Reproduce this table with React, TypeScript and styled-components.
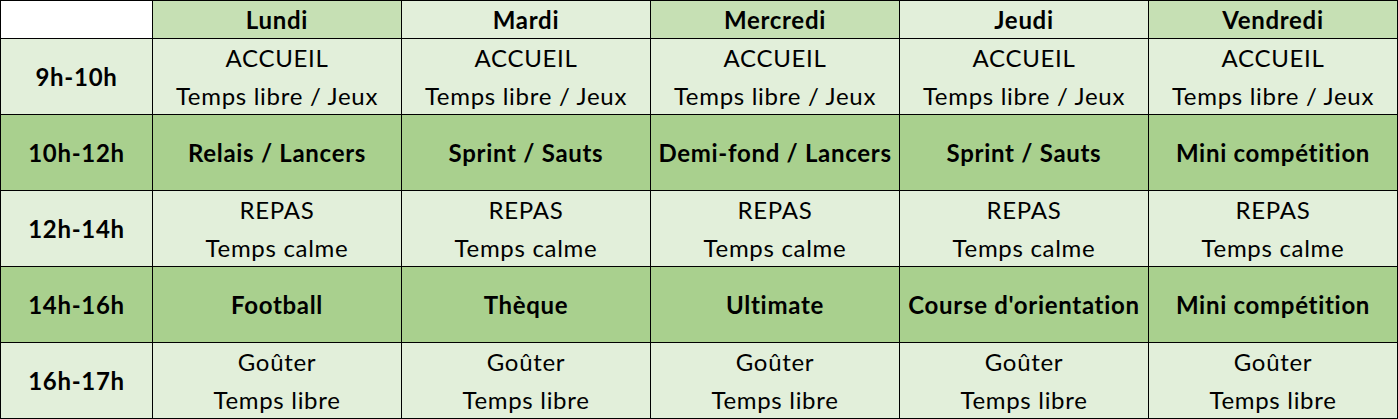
import React from "react";
import styled, { createGlobalStyle } from "styled-components";

const GlobalStyle = createGlobalStyle`
  html, body {
    margin: 0;
    padding: 0;
    background: #ffffff;
  }
  body {
    font-family: Lato, "Open Sans", "Liberation Sans", sans-serif;
    color: #000;
  }
`;

const LIGHT = "#e2efda";
const MID = "#c6e0b4";
const DARK = "#a9d08e";

const Grid = styled.div`
  display: grid;
  grid-template-columns: 151px repeat(5, 248px);
  grid-template-rows: 37px repeat(5, 75px);
  gap: 1px;
  padding: 1px;
  background: #000;
  width: 1398px;
  box-sizing: border-box;
`;

const Cell = styled.div<{ $bg: string; $bold?: boolean }>`
  background: ${(p) => p.$bg};
  display: flex;
  flex-direction: column;
  align-items: center;
  justify-content: center;
  text-align: center;
  font-size: 24px;
  letter-spacing: 0.7px;
  line-height: 38px;
  font-weight: ${(p) => (p.$bold ? 700 : 400)};
  white-space: nowrap;
`;

const days = ["Lundi", "Mardi", "Mercredi", "Jeudi", "Vendredi"];

type Slot = { time: string; activity: boolean; cells: string[][] };

const slots: Slot[] = [
  {
    time: "9h-10h",
    activity: false,
    cells: days.map(() => ["ACCUEIL", "Temps libre / Jeux"]),
  },
  {
    time: "10h-12h",
    activity: true,
    cells: [
      ["Relais / Lancers"],
      ["Sprint / Sauts"],
      ["Demi-fond / Lancers"],
      ["Sprint / Sauts"],
      ["Mini compétition"],
    ],
  },
  {
    time: "12h-14h",
    activity: false,
    cells: days.map(() => ["REPAS", "Temps calme"]),
  },
  {
    time: "14h-16h",
    activity: true,
    cells: [
      ["Football"],
      ["Thèque"],
      ["Ultimate"],
      ["Course d'orientation"],
      ["Mini compétition"],
    ],
  },
  {
    time: "16h-17h",
    activity: false,
    cells: days.map(() => ["Goûter", "Temps libre"]),
  },
];

export default function App() {
  return (
    <>
      <GlobalStyle />
      <Grid>
        <Cell $bg="#ffffff" />
        {days.map((d, i) => (
          <Cell key={d} $bg={i % 2 === 0 ? MID : LIGHT} $bold>
            {d}
          </Cell>
        ))}
        {slots.map((s) => (
          <React.Fragment key={s.time}>
            <Cell $bg={s.activity ? DARK : LIGHT} $bold>
              {s.time}
            </Cell>
            {s.cells.map((lines, i) => (
              <Cell key={i} $bg={s.activity ? DARK : LIGHT} $bold={s.activity}>
                {lines.map((l) => (
                  <span key={l}>{l}</span>
                ))}
              </Cell>
            ))}
          </React.Fragment>
        ))}
      </Grid>
    </>
  );
}
